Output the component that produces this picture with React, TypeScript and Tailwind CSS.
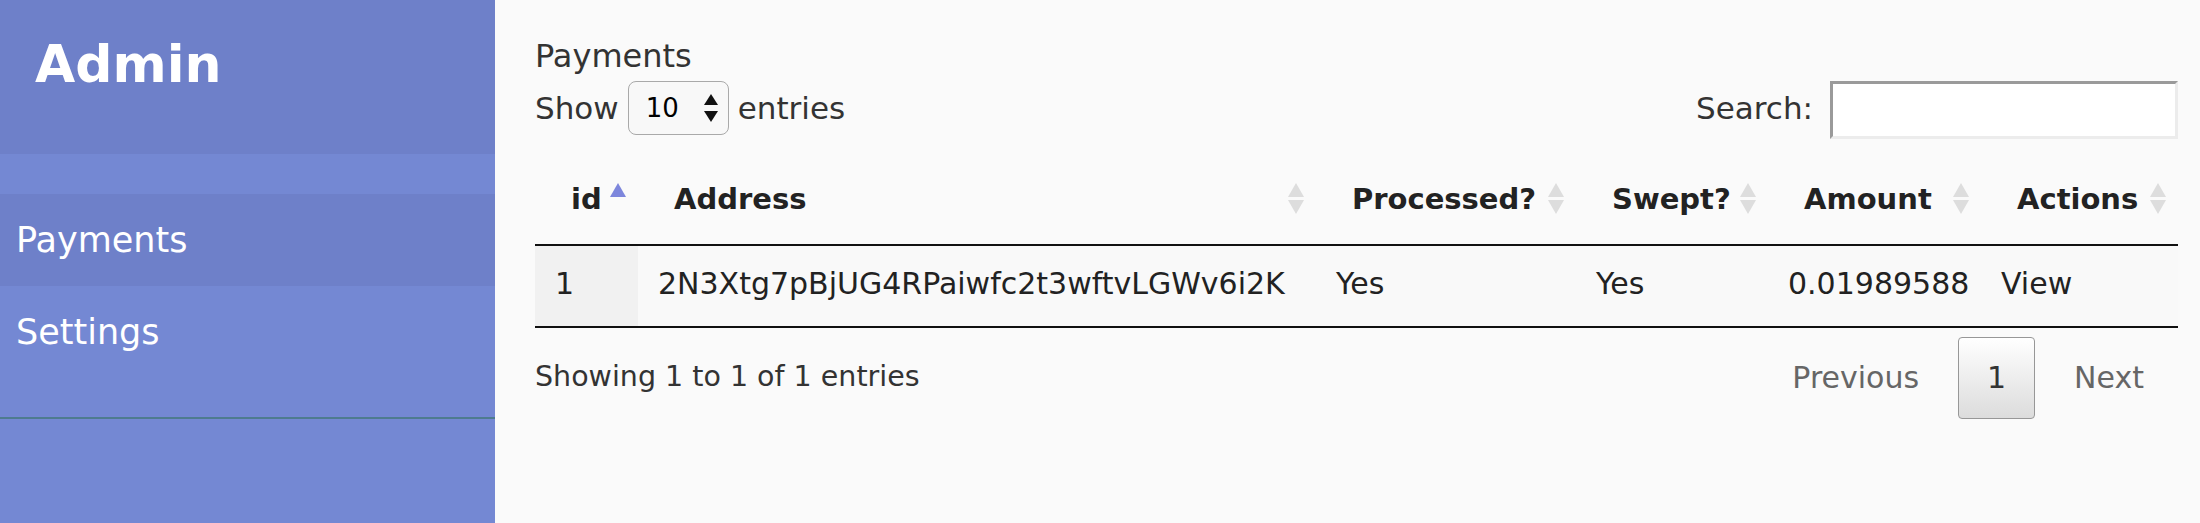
import { useState } from "react";

type Payment = {
  id: number;
  address: string;
  processed: boolean;
  swept: boolean;
  amount: string;
};

const payments: Payment[] = [
  {
    id: 1,
    address: "2N3Xtg7pBjUG4RPaiwfc2t3wftvLGWv6i2K",
    processed: true,
    swept: true,
    amount: "0.01989588",
  },
];

const columns = [
  { key: "id", label: "id", width: "w-[103px]" },
  { key: "address", label: "Address", width: "w-[678px]" },
  { key: "processed", label: "Processed?", width: "w-[260px]" },
  { key: "swept", label: "Swept?", width: "w-[192px]" },
  { key: "amount", label: "Amount", width: "w-[213px]" },
  { key: "actions", label: "Actions", width: "w-[197px]" },
];

function SortIcon({ active }: { active?: boolean }) {
  if (active) {
    return (
      <svg width="20" height="32" viewBox="0 0 20 32" className="shrink-0">
        <polygon points="10,0 18,14 2,14" fill="#7d86dc" />
      </svg>
    );
  }
  return (
    <svg width="20" height="32" viewBox="0 0 20 32" className="shrink-0">
      <polygon points="10,0 18,14 2,14" fill="#dddddd" />
      <polygon points="2,17 18,17 10,31" fill="#dddddd" />
    </svg>
  );
}

function Sidebar() {
  return (
    <aside className="flex w-[495px] shrink-0 flex-col bg-[#7488d3] text-white">
      <div className="h-[154px] bg-[#6e80c9] pl-[35px] pt-[38px]">
        <h1 className="text-[52px] font-bold leading-none">Admin</h1>
      </div>
      <div className="h-[40px]" />
      <a className="flex h-[92px] items-center bg-[#6e80c9] pl-[16px] text-[35px]">Payments</a>
      <a className="flex h-[92px] items-center pl-[16px] text-[35px]">Settings</a>
      <div className="mt-[39px] border-b-2 border-[#4e7b8f]" />
    </aside>
  );
}

export default function App() {
  const [search, setSearch] = useState("");

  return (
    <div className="flex min-h-screen bg-[#fafafa] font-['DejaVu_Sans',sans-serif] text-[#333]">
      <Sidebar />

      <main className="flex-1 pl-[40px] pr-[22px] pt-[36px]">
        <div className="flex h-[40px] items-center text-[32px]">Payments</div>

        <div className="flex h-[64px] items-center justify-between text-[31px]">
          <div className="flex items-center gap-[9px]">
            <span>Show</span>
            <div className="flex h-[54px] w-[101px] items-center justify-between rounded-[8px] border border-[#a9a9a9] bg-[#f8f8f8] pl-[17px] pr-[9px] text-[26px] text-black">
              <span>10</span>
              <svg width="16" height="30" viewBox="0 0 16 30">
                <polygon points="8,1 15,12 1,12" fill="#111" />
                <polygon points="1,18 15,18 8,29" fill="#111" />
              </svg>
            </div>
            <span>entries</span>
          </div>
          <label className="flex items-center gap-[17px]">
            <span>Search:</span>
            <input
              value={search}
              onChange={(e) => setSearch(e.target.value)}
              className="mt-[4px] h-[58px] w-[348px] border-[3px] border-t-[#9a9a9a] border-l-[#9a9a9a] border-b-[#ececec] border-r-[#ececec] bg-white px-2 text-[28px] outline-none"
            />
          </label>
        </div>

        <table className="mt-[20px] w-full table-fixed border-collapse">
          <colgroup>
            {columns.map((c) => (
              <col key={c.key} className={c.width} />
            ))}
          </colgroup>
          <thead>
            <tr className="border-b-2 border-[#111]">
              {columns.map((c) => (
                <th
                  key={c.key}
                  className="pb-[27px] pl-[36px] pr-[10px] pt-[21px] text-left text-[29px] font-bold leading-[36px] text-[#222]"
                >
                  <div className="flex items-center justify-between">
                    <span className="whitespace-nowrap">{c.label}</span>
                    <SortIcon active={c.key === "id"} />
                  </div>
                </th>
              ))}
            </tr>
          </thead>
          <tbody>
            {payments
              .filter((p) => p.address.toLowerCase().includes(search.toLowerCase()))
              .map((p) => (
                <tr key={p.id} className="border-b-2 border-[#111] bg-[#f9f9f9] text-[30px] leading-[36px] text-[#222]">
                  <td className="bg-[#f1f1f1] pb-[24px] pl-[20px] pt-[20px]">{p.id}</td>
                  <td className="whitespace-nowrap pb-[24px] pl-[20px] pt-[20px]">{p.address}</td>
                  <td className="pb-[24px] pl-[20px] pt-[20px]">{p.processed ? "Yes" : "No"}</td>
                  <td className="pb-[24px] pl-[20px] pt-[20px]">{p.swept ? "Yes" : "No"}</td>
                  <td className="pb-[24px] pl-[20px] pt-[20px]">{p.amount}</td>
                  <td className="pb-[24px] pl-[20px] pt-[20px]">View</td>
                </tr>
              ))}
          </tbody>
        </table>

        <div className="mt-[8px] flex h-[83px] items-center justify-between text-[28.5px]">
          <span>Showing 1 to 1 of 1 entries</span>
          <div className="flex items-center gap-[5px] text-[30px]">
            <span className="px-[34px] text-[#666]">Previous</span>
            <span className="flex h-[82px] w-[77px] items-center justify-center rounded-[4px] border border-[#979797] bg-gradient-to-b from-white to-[#dcdcdc] text-[#333]">
              1
            </span>
            <span className="px-[34px] text-[#666]">Next</span>
          </div>
        </div>
      </main>
    </div>
  );
}
